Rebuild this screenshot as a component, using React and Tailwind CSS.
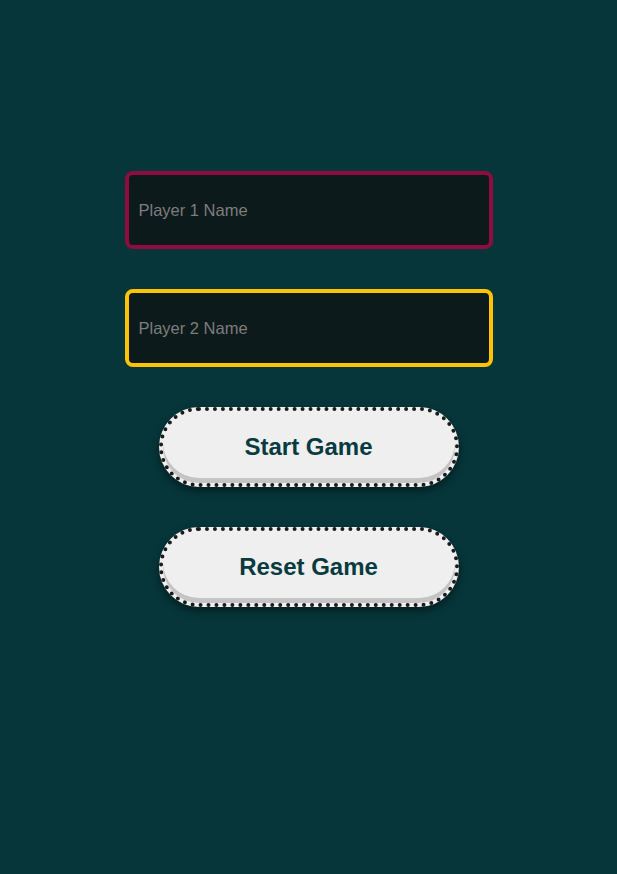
import React, { useState } from "react";

const App = () => {
  const [p1, setP1] = useState("");
  const [p2, setP2] = useState("");

  return (
    <div className="min-h-screen w-full bg-[#06363a] flex flex-col items-center pt-[171px] font-['Liberation_Sans',Arial,sans-serif]">
      <div className="flex flex-col items-center gap-10 w-[368px]">
        <input
          type="text"
          value={p1}
          onChange={(e) => setP1(e.target.value)}
          placeholder="Player 1 Name"
          className="w-full h-[78px] px-[10px] bg-[#0c1a1b] border-4 border-[#8e0c3e] rounded-lg text-[16.5px] text-white placeholder:text-[#7d7d7d] outline-none"
        />
        <input
          type="text"
          value={p2}
          onChange={(e) => setP2(e.target.value)}
          placeholder="Player 2 Name"
          className="w-full h-[78px] px-[10px] bg-[#0c1a1b] border-4 border-[#ffc300] rounded-lg text-[16.5px] text-white placeholder:text-[#7d7d7d] outline-none"
        />
        <button className="w-[300px] h-[80px] rounded-full bg-[#efefef] border-4 border-dotted border-[#1b1b1b] text-[24px] font-bold text-[#073b3f] shadow-[inset_0_-5px_0_#c4c4c4,0_4px_8px_rgba(0,0,0,0.45)]">
          Start Game
        </button>
        <button className="w-[300px] h-[80px] rounded-full bg-[#efefef] border-4 border-dotted border-[#1b1b1b] text-[24px] font-bold text-[#073b3f] shadow-[inset_0_-5px_0_#c4c4c4,0_4px_8px_rgba(0,0,0,0.45)]">
          Reset Game
        </button>
      </div>
    </div>
  );
};

export default App;
